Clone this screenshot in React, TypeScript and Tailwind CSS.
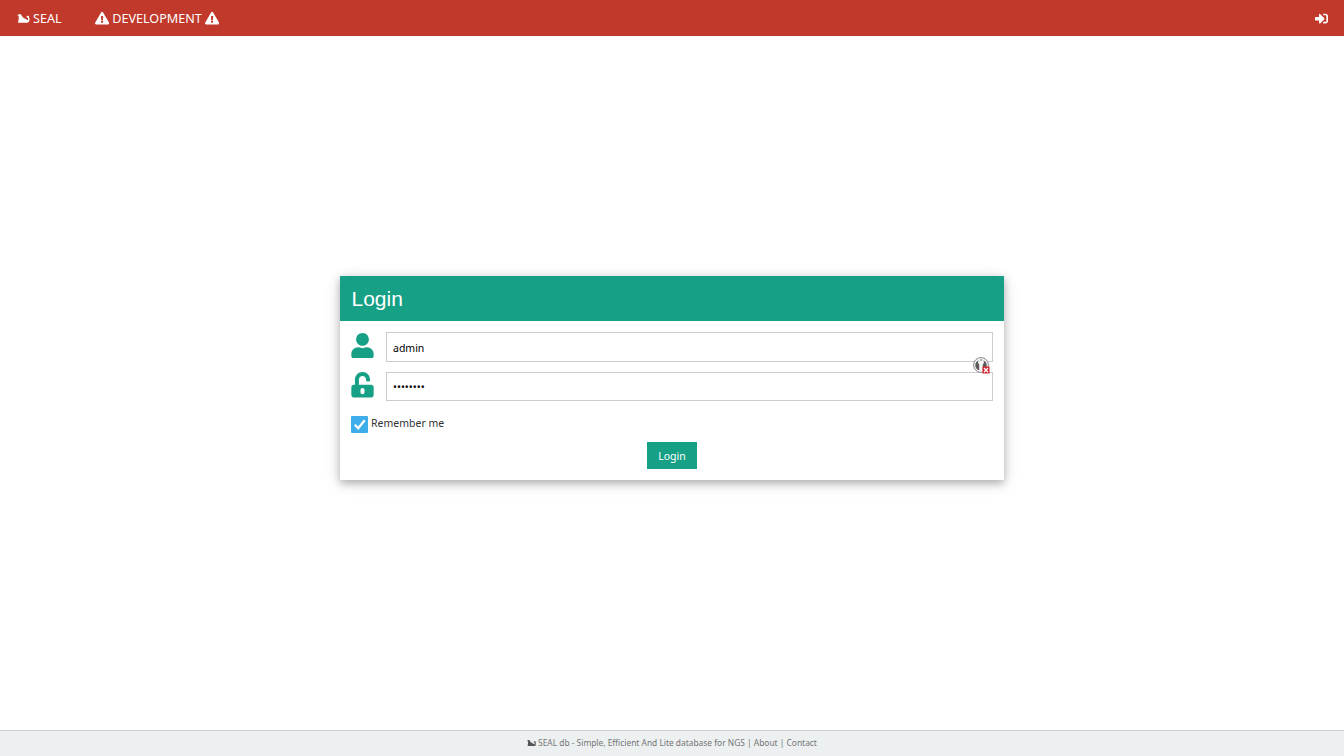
import React from "react";
import { FaExclamationTriangle, FaSignInAlt, FaUnlockAlt, FaUser } from "react-icons/fa";

function SealIcon({ className }: { className: string }) {
  return (
    <svg viewBox="0 0 26 19" className={className} fill="currentColor" aria-hidden="true">
      <path d="M0 2.500 2.500.8 5 0 8 1l1.500 3.200C11 7 13 8.300 16 9.500c2.500 1 4 2.300 4.800 4 1.500-1.200 2.200-2.700 2-4.500L20 7.500 19.500 3.500 22 4.500 24.500 3l.3 3.700C26.300 10 26.200 14 24 16.800c-1 1.200-2.500 1.700-4 1.700H2L.8 16.500l2.400-1.200L1.500 13l1.500-1.500C2.500 9.500 2.700 7.500 3.200 5z" />
    </svg>
  );
}

function KeyBadge() {
  return (
    <svg viewBox="0 0 18 18" className="absolute right-[2px] top-[24.500px] h-[18px] w-[18px]" aria-hidden="true">
      <circle cx="8" cy="8" r="7.400" fill="#f8f8f8" stroke="#888" strokeWidth="1" />
      <path d="M5.600 3.300C3.400 4.300 2.300 6 2.300 8.200c0 2 1 3.900 2.900 4.900h1V7.600L5 5.800z" fill="#5c5c5c" />
      <path d="M10.400 3.300c2.200 1 3.300 2.700 3.300 4.900 0 2-1 3.900-2.900 4.900h-1V7.600L11 5.800z" fill="#5c5c5c" />
      <circle cx="8" cy="3" r=".8" fill="#555" />
      <path d="M9.500 9.500h7v7h-7z" fill="#d01f2c" />
      <path d="m11 11 4 4.200m0-4.200-4 4.200" stroke="#fff" strokeWidth="1.300" />
    </svg>
  );
}

export default function App() {
  return (
    <div className="flex h-screen flex-col bg-white font-['Noto_Sans',sans-serif] text-[#333]">
      <header className="flex h-9 shrink-0 items-center border-b border-[#b53a2c] bg-[#c0392b] pl-[17px] pr-4 pt-[2px] text-[12.6px] text-white">
        <a className="flex items-center gap-[3px]">
          <SealIcon className="h-[9px] w-[13px]" />
          <span className="pt-px">SEAL</span>
        </a>
        <div className="ml-[33.500px] flex items-center gap-[3px]">
          <FaExclamationTriangle className="h-[14.200px] w-[14.200px]" />
          <span className="pt-px">DEVELOPMENT</span>
          <FaExclamationTriangle className="h-[14.200px] w-[14.200px]" />
        </div>
        <FaSignInAlt className="ml-auto h-[13px] w-[13px]" />
      </header>

      <main className="flex grow items-center justify-center pb-[10px]">
        <form className="h-[204px] w-[664px] bg-white shadow-[0_3px_7px_rgba(0,0,0,0.2),0_3px_14px_rgba(0,0,0,0.19)]">
          <div className="flex h-[45px] items-center bg-[#16a085] px-[11.500px]">
            <h1 className="font-['Liberation_Sans',Arial,sans-serif] text-[21px] text-white">Login</h1>
          </div>
          <div className="px-[11px] pt-[11px] text-[10.5px]">
            <div className="relative flex h-[30px]">
              <FaUser className="mt-[0.5px] h-[25.500px] w-[23px] text-[#16a085]" />
              <input
                type="text"
                defaultValue="admin"
                className="ml-auto h-[30px] w-[607px] border border-[#ccc] px-[6px] pt-px text-black outline-none"
              />
              <KeyBadge />
            </div>
            <div className="mt-[10px] flex h-[29px]">
              <FaUnlockAlt className="h-[25.500px] w-[23px] text-[#16a085]" />
              <input
                type="password"
                defaultValue="password"
                className="ml-auto h-[29px] w-[607px] border border-[#ccc] px-[6px] text-black outline-none"
              />
            </div>
            <label className="mt-[15px] flex h-[17px] items-start gap-[3px]">
              <span className="flex h-[17px] w-[17px] items-center justify-center rounded-[1px] bg-[#3daee9]">
                <svg viewBox="0 0 17 17" className="h-[17px] w-[17px]" fill="none" aria-hidden="true">
                  <path d="m3.800 8.800 3.400 3.400 6.500-8" stroke="white" strokeWidth="2.300" />
                </svg>
              </span>
              <span className="leading-[15px]">Remember me</span>
            </label>
            <div className="mt-[9px] flex justify-center">
              <button type="button" className="h-[27px] w-[50px] bg-[#16a085] pt-[2px] text-white">
                Login
              </button>
            </div>
          </div>
        </form>
      </main>

      <footer className="flex h-[26px] shrink-0 items-center justify-center border-t border-[#c9cfd0] bg-[#ecf0f1] pb-px text-[8.400px] text-[#757575]">
        <SealIcon className="mr-[2px] h-[6.500px] w-[9px] text-[#555]" />
        <span>
          SEAL db - Simple, Efficient And Lite database for NGS | <a>About</a> | <a>Contact</a>
        </span>
      </footer>
    </div>
  );
}
